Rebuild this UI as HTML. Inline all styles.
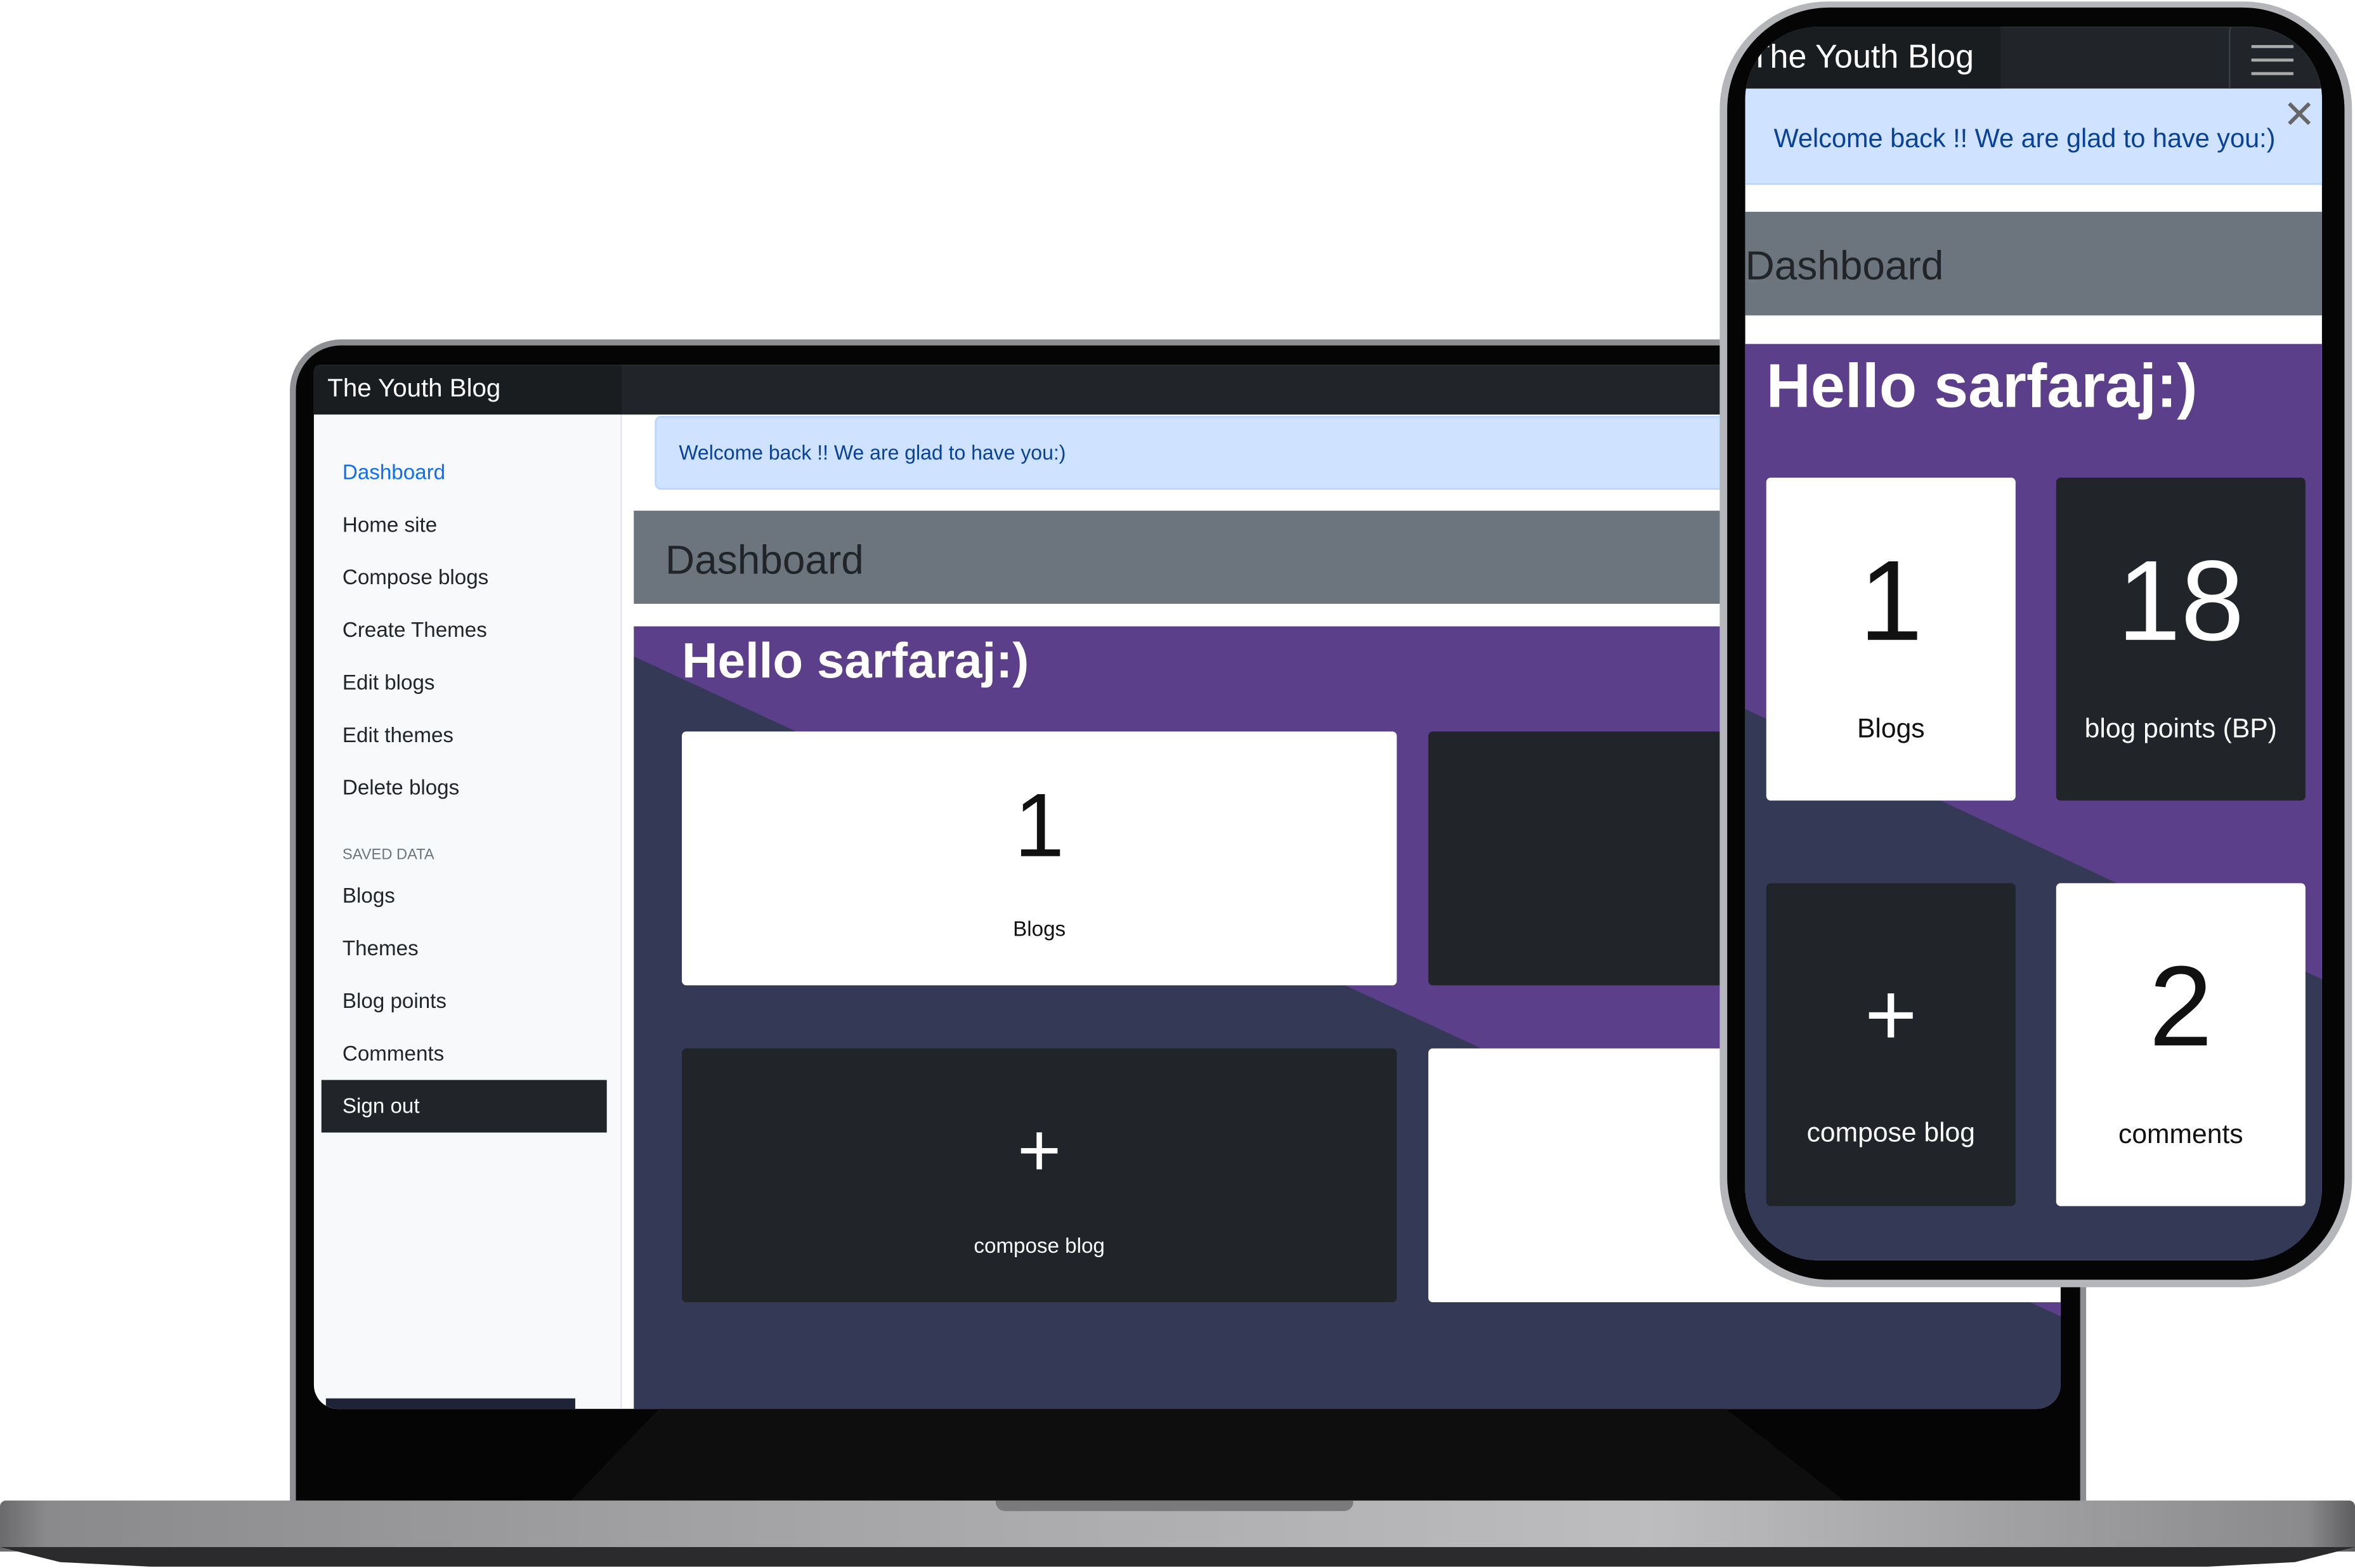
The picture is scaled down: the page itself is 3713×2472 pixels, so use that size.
<!DOCTYPE html>
<html><head><meta charset="utf-8"><style>
*{margin:0;padding:0;box-sizing:border-box}
html,body{width:3713px;height:2472px;overflow:hidden;background:#fff}
#w{position:absolute;left:0;top:0;width:1568px;height:1044px;transform:scale(2.368);transform-origin:0 0;font-family:"Liberation Sans",sans-serif}
.a{position:absolute}
.side a{position:absolute;left:19px;font-size:14px;color:#212529;text-decoration:none}
.card{position:absolute;border-radius:3px;text-align:center}
</style></head><body><div id="w">
<div class="a" style="left:193px;top:226px;width:1196px;height:790px;border-radius:34px 34px 0 0;background:#8d8f92"></div>
<div class="a" style="left:197px;top:230px;width:1188px;height:786px;border-radius:30px 30px 0 0;background:#050505"></div>
<div class="a" style="left:209px;top:243px;width:1163px;height:695px;overflow:hidden;border-radius:4px 4px 16px 16px;background:#fff">
 <div class="a" style="left:0;top:0;width:1163px;height:33px;background:#212529"></div>
 <div class="a" style="left:0;top:0;width:205px;height:33px;background:#1a1d20;color:#fff;font-size:17px;line-height:32px;padding-left:9px">The Youth Blog</div>
 <div class="a side" style="left:0;top:33px;width:205px;height:662px;background:#f8f9fa;border-right:1px solid #e3e5e8">
  <a style="top:30px;color:#0d6efd">Dashboard</a>
  <a style="top:65px">Home site</a>
  <a style="top:100px">Compose blogs</a>
  <a style="top:135px">Create Themes</a>
  <a style="top:170px">Edit blogs</a>
  <a style="top:205px">Edit themes</a>
  <a style="top:240px">Delete blogs</a>
  <div class="a" style="left:19px;top:288px;font-size:10px;color:#6c757d">SAVED DATA</div>
  <a style="top:312px">Blogs</a>
  <a style="top:347px">Themes</a>
  <a style="top:382px">Blog points</a>
  <a style="top:417px">Comments</a>
  <div class="a" style="left:5px;top:443px;width:190px;height:35px;background:#212529;color:#fff;font-size:14px;line-height:35px;padding-left:14px">Sign out</div>
  <div class="a" style="left:8px;top:655px;width:166px;height:8px;background:#1e2337"></div>
 </div>
 <div class="a" style="left:227px;top:34px;width:960px;height:49px;background:#cfe2ff;border:1px solid #b6d4fe;border-radius:4px;color:#084298;font-size:13.5px;line-height:47px;padding-left:15px">Welcome back !! We are glad to have you:)</div>
 <div class="a" style="left:213px;top:97px;width:960px;height:62px;background:#6c757d;color:#212529;font-size:27px;line-height:66px;padding-left:21px">Dashboard</div>
 <div class="a" style="left:213px;top:174px;width:960px;height:530px;background:#5b3f8a;overflow:hidden">
  <svg class="a" style="left:0;top:0" width="960" height="530"><polygon points="0,20 960,464 960,530 0,530" fill="#343a56"/></svg>
  <div class="a" style="left:32px;top:4px;color:#fff;font-size:33px;font-weight:bold">Hello sarfaraj:)</div>
  <div class="card" style="left:32px;top:70px;width:476px;height:169px;background:#fff;color:#111"><div style="font-size:60px;margin-top:28px;line-height:70px">1</div><div style="font-size:14px;margin-top:25px">Blogs</div></div>
  <div class="card" style="left:529px;top:70px;width:440px;height:169px;background:#212529"></div>
  <div class="card" style="left:32px;top:281px;width:476px;height:169px;background:#212529;color:#fff"><div style="font-size:50px;margin-top:38px;line-height:60px">+</div><div style="font-size:14px;margin-top:25px">compose blog</div></div>
  <div class="card" style="left:529px;top:281px;width:440px;height:169px;background:#fff"></div>
 </div>
</div>
<svg class="a" style="left:209px;top:938px" width="1163" height="62"><polygon points="230,0 940,0 1020,62 170,62" fill="#0e0e0e"/></svg>
<div class="a" style="left:0;top:999px;width:1568px;height:34px;border-radius:4px 4px 0 0;background:linear-gradient(90deg,#6a6a6c 0%,#8a8a8c 2%,#a2a2a4 30%,#bdbdbf 70%,#8a8a8c 98%,#5d5d5f 100%)"></div>
<div class="a" style="left:663px;top:999px;width:238px;height:7px;border-radius:0 0 6px 6px;background:#7a7a7c"></div>
<svg class="a" style="left:0;top:1030px" width="1568" height="14"><polygon points="0,0 1568,0 1528,10 1470,13 100,13 40,10" fill="#2b2b2d"/></svg>
<div class="a" style="left:1145px;top:1px;width:421px;height:856px;border-radius:72px;background:#b5b6b9"></div>
<div class="a" style="left:1150px;top:5px;width:411px;height:847px;border-radius:68px;background:#050505"></div>
<div class="a" style="left:1162px;top:18px;width:384px;height:821px;border-radius:48px;overflow:hidden;background:#fff">
 <div class="a" style="left:0;top:0;width:384px;height:41px;background:#212529"></div>
 <div class="a" style="left:0;top:0;width:170px;height:41px;background:#1a1d20;color:#fff;font-size:22px;line-height:40px;padding-left:3px;white-space:nowrap">The Youth Blog</div>
 <div class="a" style="left:322px;top:-2px;width:62px;height:46px;border:1px solid #3a3f45;border-radius:5px"></div>
 <div class="a" style="left:337px;top:12px;width:28px;height:2px;background:#aaa"></div>
 <div class="a" style="left:337px;top:21px;width:28px;height:2px;background:#aaa"></div>
 <div class="a" style="left:337px;top:30px;width:28px;height:2px;background:#aaa"></div>
 <div class="a" style="left:0;top:41px;width:384px;height:64px;background:#cfe2ff;border-bottom:1px solid #b6d4fe;color:#084298;font-size:17.5px;line-height:66px;padding-left:19px;white-space:nowrap">Welcome back !! We are glad to have you:)</div>
 <div class="a" style="left:358px;top:43px;color:#666;font-size:26px">✕</div>
 <div class="a" style="left:0;top:123px;width:384px;height:69px;background:#6c757d;color:#212529;font-size:27px;line-height:72px">Dashboard</div>
 <div class="a" style="left:0;top:211px;width:384px;height:610px;background:#5b3f8a;overflow:hidden">
  <svg class="a" style="left:0;top:0" width="384" height="610"><polygon points="0,243 384,423 384,610 0,610" fill="#343a56"/></svg>
  <div class="a" style="left:14px;top:5px;color:#fff;font-size:41px;font-weight:bold;white-space:nowrap">Hello sarfaraj:)</div>
  <div class="card" style="left:14px;top:89px;width:166px;height:215px;background:#fff;color:#111"><div style="font-size:76px;margin-top:38px;line-height:90px">1</div><div style="font-size:18px;margin-top:29px">Blogs</div></div>
  <div class="card" style="left:207px;top:89px;width:166px;height:215px;background:#212529;color:#fff"><div style="font-size:76px;margin-top:38px;line-height:90px">18</div><div style="font-size:18px;margin-top:29px">blog points (BP)</div></div>
  <div class="card" style="left:14px;top:359px;width:166px;height:215px;background:#212529;color:#fff"><div style="font-size:60px;margin-top:48px;line-height:80px">+</div><div style="font-size:18px;margin-top:28px">compose blog</div></div>
  <div class="card" style="left:207px;top:359px;width:166px;height:215px;background:#fff;color:#111"><div style="font-size:76px;margin-top:38px;line-height:90px">2</div><div style="font-size:18px;margin-top:29px">comments</div></div>
 </div>
</div>
</div></body></html>
